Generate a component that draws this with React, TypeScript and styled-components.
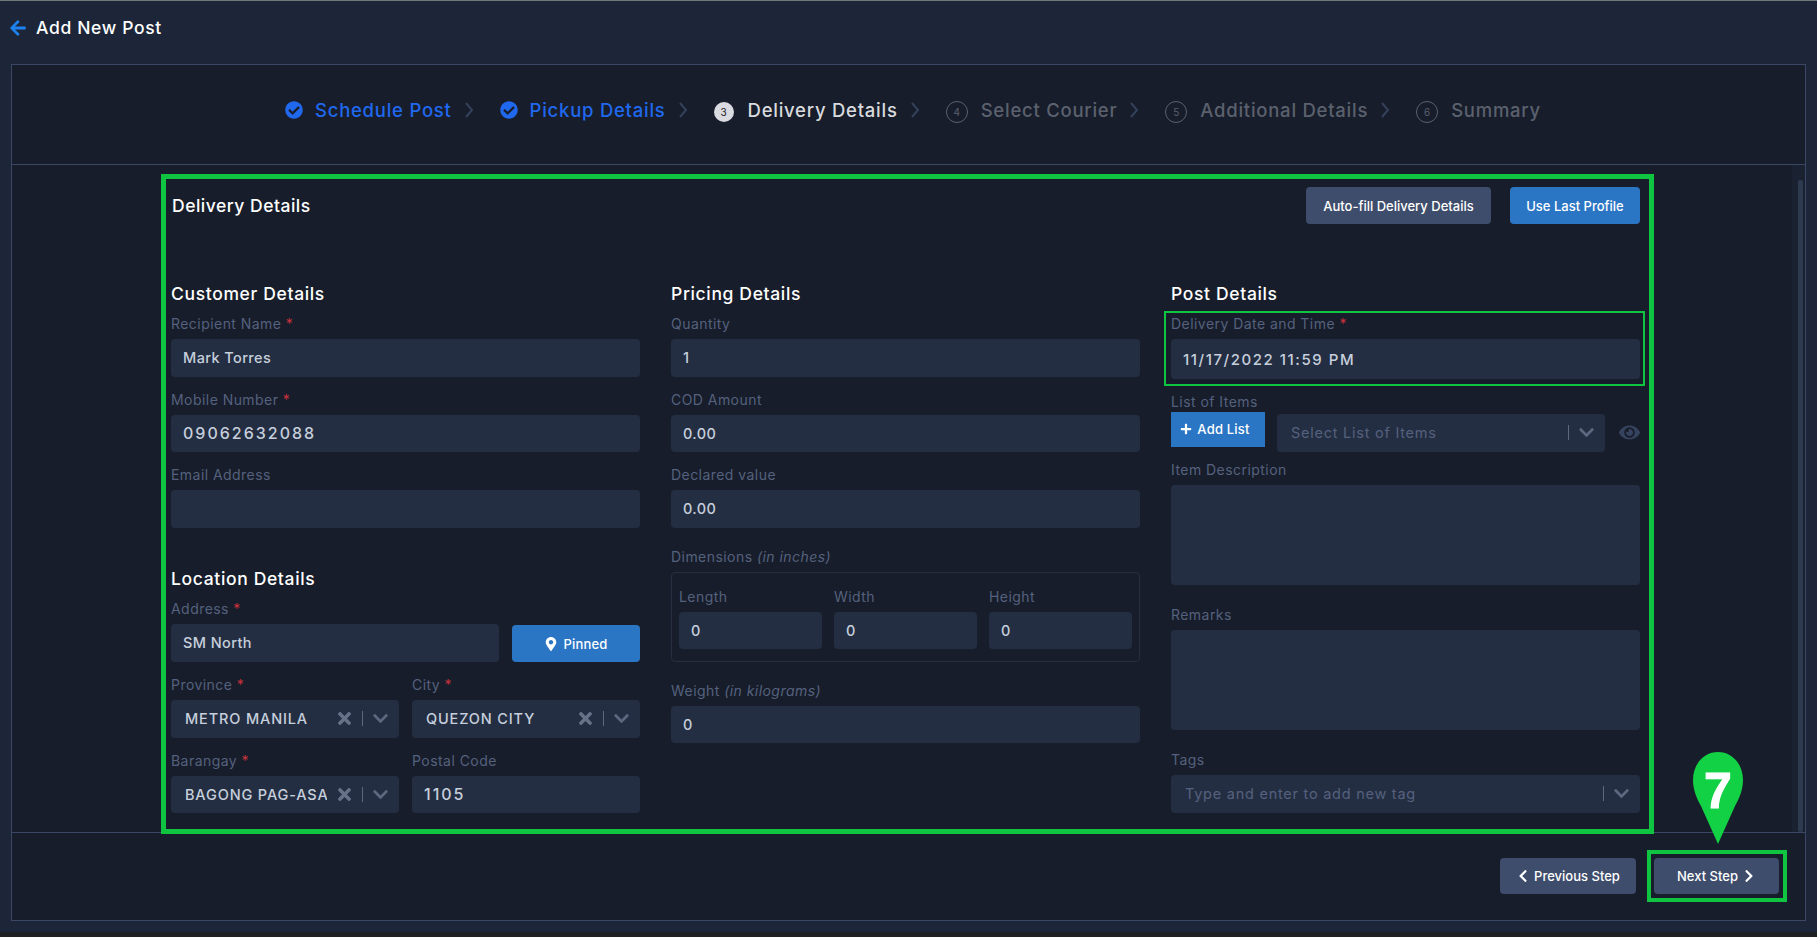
import styled, { createGlobalStyle } from "styled-components";
import {
  FaArrowLeft,
  FaCheckCircle,
  FaChevronDown,
  FaChevronLeft,
  FaChevronRight,
  FaEye,
  FaMapMarkerAlt,
  FaPlus,
  FaTimes,
} from "react-icons/fa";

const steps = [
  { label: "Schedule Post", state: "done" },
  { label: "Pickup Details", state: "done" },
  { label: "Delivery Details", state: "active" },
  { label: "Select Courier", state: "todo" },
  { label: "Additional Details", state: "todo" },
  { label: "Summary", state: "todo" },
];

const Required = () => <Star>*</Star>;

const App = () => {
  return (
    <Page>
      <GlobalStyle />
      <Header>
        <BackIcon />
        <PageTitle>Add New Post</PageTitle>
      </Header>
      <Frame>
        <Stepper>
          {steps.map((step, i) => (
            <Step key={step.label}>
              {step.state === "done" ? (
                <DoneIcon />
              ) : (
                <StepNumber $active={step.state === "active"}>{i + 1}</StepNumber>
              )}
              <StepLabel $state={step.state}>{step.label}</StepLabel>
              {i < steps.length - 1 && (
                <StepArrow width="10" height="16" viewBox="0 0 10 16">
                  <path d="M2 1l6 7-6 7" fill="none" stroke="currentColor" strokeWidth="2" />
                </StepArrow>
              )}
            </Step>
          ))}
        </Stepper>
        <Body>
          <Panel>
            <PanelHead>
              <PanelTitle>Delivery Details</PanelTitle>
              <PanelActions>
                <SlateButton>Auto-fill Delivery Details</SlateButton>
                <BlueButton>Use Last Profile</BlueButton>
              </PanelActions>
            </PanelHead>
            <Columns>
              <Column>
                <SectionTitle>Customer Details</SectionTitle>
                <Field>
                  <Label>Recipient Name <Required /></Label>
                  <Input>Mark Torres</Input>
                </Field>
                <Field>
                  <Label>Mobile Number <Required /></Label>
                  <Input $numeric>09062632088</Input>
                </Field>
                <Field>
                  <Label>Email Address</Label>
                  <Input />
                </Field>
                <LocationTitle>Location Details</LocationTitle>
                <Field>
                  <Label>Address <Required /></Label>
                  <AddressRow>
                    <Input>SM North</Input>
                    <PinButton>
                      <FaMapMarkerAlt size={14} />
                      Pinned
                    </PinButton>
                  </AddressRow>
                </Field>
                <TwoUp>
                  <Field>
                    <Label>Province <Required /></Label>
                    <Select>
                      <SelectValue>METRO MANILA</SelectValue>
                      <ClearIcon />
                      <Divider />
                      <CaretIcon />
                    </Select>
                  </Field>
                  <Field>
                    <Label>City <Required /></Label>
                    <Select>
                      <SelectValue>QUEZON CITY</SelectValue>
                      <ClearIcon />
                      <Divider />
                      <CaretIcon />
                    </Select>
                  </Field>
                  <Field>
                    <Label>Barangay <Required /></Label>
                    <Select>
                      <SelectValue>BAGONG PAG-ASA</SelectValue>
                      <ClearIcon />
                      <Divider />
                      <CaretIcon />
                    </Select>
                  </Field>
                  <Field>
                    <Label>Postal Code</Label>
                    <Input $numeric>1105</Input>
                  </Field>
                </TwoUp>
              </Column>

              <Column>
                <SectionTitle>Pricing Details</SectionTitle>
                <Field>
                  <Label>Quantity</Label>
                  <Input>1</Input>
                </Field>
                <Field>
                  <Label>COD Amount</Label>
                  <Input>0.00</Input>
                </Field>
                <Field>
                  <Label>Declared value</Label>
                  <Input>0.00</Input>
                </Field>
                <DimensionsField>
                  <Label>Dimensions <em>(in inches)</em></Label>
                  <DimensionsBox>
                    <div>
                      <Label>Length</Label>
                      <Input>0</Input>
                    </div>
                    <div>
                      <Label>Width</Label>
                      <Input>0</Input>
                    </div>
                    <div>
                      <Label>Height</Label>
                      <Input>0</Input>
                    </div>
                  </DimensionsBox>
                </DimensionsField>
                <Field>
                  <Label>Weight <em>(in kilograms)</em></Label>
                  <Input>0</Input>
                </Field>
              </Column>

              <Column>
                <SectionTitle>Post Details</SectionTitle>
                <DateField>
                  <Label>Delivery Date and Time <Required /></Label>
                  <DateInput>11/17/2022 11:59 PM</DateInput>
                </DateField>
                <ListField>
                  <Label>List of Items</Label>
                  <ListRow>
                    <AddListButton>
                      <FaPlus size={12} />
                      Add List
                    </AddListButton>
                    <Select>
                      <Placeholder>Select List of Items</Placeholder>
                      <Divider />
                      <CaretIcon />
                    </Select>
                    <EyeIcon />
                  </ListRow>
                </ListField>
                <TextareaField>
                  <Label>Item Description</Label>
                  <Textarea />
                </TextareaField>
                <TextareaField>
                  <Label>Remarks</Label>
                  <Textarea />
                </TextareaField>
                <Field>
                  <Label>Tags</Label>
                  <Select>
                    <Placeholder>Type and enter to add new tag</Placeholder>
                    <Divider />
                    <CaretIcon />
                  </Select>
                </Field>
              </Column>
            </Columns>
          </Panel>
          <ScrollTrack>
            <ScrollThumb />
          </ScrollTrack>
        </Body>
        <Footer>
          <PrevButton>
            <FaChevronLeft size={14} />
            Previous Step
          </PrevButton>
          <NextWrap>
            <NextButton>
              Next Step
              <FaChevronRight size={14} />
            </NextButton>
            <Pin>
              <svg width="50" height="92" viewBox="0 0 50 92">
                <path
                  d="M25 0C11 0 0 12 0 28c0 9 3 17 8 26L25 92l17-38c5-9 8-17 8-26C50 12 39 0 25 0Z"
                  fill="#12d144"
                />
              </svg>
              <PinNumber>7</PinNumber>
            </Pin>
          </NextWrap>
        </Footer>
      </Frame>
      <BottomStrip />
    </Page>
  );
};

export default App;

const GlobalStyle = createGlobalStyle`
  html, body {
    margin: 0;
    padding: 0;
    background: #1c2638;
  }
  * {
    box-sizing: border-box;
  }
  body {
    font-family: "Inter", "Noto Sans", sans-serif;
  }
`;

const Page = styled.div`
  width: 1817px;
  height: 937px;
  overflow: hidden;
  display: flex;
  flex-direction: column;
  background: #1c2638;
  border-top: 1px solid #6f7a7c;
`;

const Header = styled.div`
  height: 63px;
  flex: none;
  display: flex;
  align-items: flex-start;
  gap: 9px;
  padding: 17px 0 0 9px;
`;

const BackIcon = styled(FaArrowLeft)`
  color: #1d82ed;
  width: 18px;
  height: 18px;
  margin-top: 1px;
`;

const PageTitle = styled.div`
  color: #fff;
  font-size: 17.5px;
  font-weight: 500;
  line-height: 20px;
  letter-spacing: 0.65px;
`;

const Frame = styled.div`
  height: 857px;
  flex: none;
  margin: 0 11px 0 11px;
  width: 1795px;
  display: flex;
  flex-direction: column;
  background: #171d2a;
  border: 1px solid #3a4865;
`;

const Stepper = styled.div`
  height: 100px;
  flex: none;
  display: flex;
  align-items: center;
  justify-content: flex-start;
  padding: 0 0 9px 273px;
  border-bottom: 1px solid #3a4865;
`;

const Step = styled.div`
  display: flex;
  align-items: center;
`;

const DoneIcon = styled(FaCheckCircle)`
  width: 18px;
  height: 18px;
  color: #2068ee;
  margin-right: 12px;
`;

const StepNumber = styled.span<{ $active: boolean }>`
  width: ${({ $active }) => ($active ? "20px" : "22px")};
  height: ${({ $active }) => ($active ? "20px" : "22px")};
  margin-right: ${({ $active }) => ($active ? "14px" : "13px")};
  margin-top: 3px;
  border-radius: 50%;
  display: flex;
  align-items: center;
  justify-content: center;
  font-size: 10px;
  background: ${({ $active }) => ($active ? "#d9dbe0" : "transparent")};
  border: ${({ $active }) => ($active ? "none" : "1px solid #5a6070")};
  color: ${({ $active }) => ($active ? "#222" : "#5a6070")};
`;

const StepLabel = styled.span<{ $state: string }>`
  font-size: 18.5px;
  font-weight: 500;
  letter-spacing: 0.75px;
  white-space: nowrap;
  color: ${({ $state }) =>
    $state === "done" ? "#2068ee" : $state === "active" ? "#d8dade" : "#5b616e"};
`;

const StepArrow = styled.svg`
  color: #34415b;
  margin: 0 26px 0 12px;
`;

const Body = styled.div`
  flex: 1;
  min-height: 0;
  display: flex;
  justify-content: space-between;
  padding: 9px 0 0 149px;
`;

const Panel = styled.div`
  width: 1493px;
  height: 660px;
  flex: none;
  position: relative;
  z-index: 1;
  border: 5px solid #0ec441;
  padding: 8px 9px 0 5px;
`;

const PanelHead = styled.div`
  height: 37px;
  margin-bottom: 59px;
  display: flex;
  align-items: center;
  justify-content: space-between;
`;

const PanelTitle = styled.div`
  color: #fff;
  font-size: 17.5px;
  font-weight: 500;
  letter-spacing: 0.5px;
  padding-left: 1px;
  margin-top: -1px;
`;

const PanelActions = styled.div`
  display: flex;
  gap: 19px;
`;

const ActionButton = styled.button`
  height: 37px;
  border: none;
  border-radius: 4px;
  color: #fff;
  font-family: inherit;
  font-size: 13px;
  font-weight: 500;
  padding: 0;
`;

const SlateButton = styled(ActionButton)`
  width: 185px;
  background: #3e4d6b;
`;

const BlueButton = styled(ActionButton)`
  width: 130px;
  background: #2b76c4;
`;

const Columns = styled.div`
  display: grid;
  grid-template-columns: repeat(3, 469px);
  column-gap: 31px;
`;

const Column = styled.div`
  min-width: 0;
`;

const SectionTitle = styled.div`
  color: #fff;
  font-size: 17.5px;
  font-weight: 500;
  line-height: 22px;
  letter-spacing: 0.65px;
  margin-bottom: 8px;
`;

const LocationTitle = styled(SectionTitle)`
  margin-top: 40.5px;
`;

const Field = styled.div`
  margin-bottom: 12px;
`;

const Label = styled.div`
  color: #55617e;
  font-size: 14px;
  font-weight: 400;
  line-height: 20px;
  padding-top: 1px;
  letter-spacing: 0.45px;
  margin-bottom: 5px;
  white-space: nowrap;
`;

const Star = styled.span`
  color: #c8323c;
`;

const Input = styled.div<{ $numeric?: boolean }>`
  height: 37.5px;
  flex: 1;
  min-width: 0;
  display: flex;
  align-items: center;
  padding: 0 12px;
  background: #242e42;
  border-radius: 4px;
  color: #c6cfdc;
  font-size: ${({ $numeric }) => ($numeric ? "16px" : "14.5px")};
  font-weight: 500;
  letter-spacing: ${({ $numeric }) => ($numeric ? "2px" : "0.4px")};
`;

const AddressRow = styled.div`
  display: flex;
  gap: 13px;
`;

const PinButton = styled.button`
  width: 128px;
  height: 37px;
  flex: none;
  margin-top: 1px;
  display: flex;
  align-items: center;
  justify-content: center;
  gap: 5px;
  border: none;
  border-radius: 4px;
  background: #2b76c4;
  color: #fff;
  font-family: inherit;
  font-size: 13px;
  font-weight: 500;
  letter-spacing: 0.2px;
`;

const TwoUp = styled.div`
  display: grid;
  grid-template-columns: 228px 228px;
  column-gap: 13px;
`;

const Select = styled.div`
  height: 37.5px;
  flex: 1;
  min-width: 0;
  display: flex;
  align-items: center;
  padding: 0 11px 0 14px;
  background: #242e42;
  border-radius: 4px;
`;

const SelectValue = styled.span`
  flex: 1;
  min-width: 0;
  overflow: hidden;
  white-space: nowrap;
  color: #c6cfdc;
  font-size: 14.5px;
  font-weight: 500;
  letter-spacing: 0.85px;
`;

const Placeholder = styled(SelectValue)`
  color: #55617e;
  font-weight: 400;
  letter-spacing: 0.75px;
`;

const ClearIcon = styled(FaTimes)`
  flex: none;
  width: 13px;
  height: 19px;
  margin-left: 11px;
  color: #677187;
`;

const Divider = styled.span`
  flex: none;
  width: 1px;
  height: 15px;
  margin: 0 10px 0 11px;
  background: #5d6880;
`;

const CaretIcon = styled(FaChevronDown)`
  flex: none;
  width: 15px;
  height: 17px;
  color: #5d6880;
`;

const DimensionsField = styled.div`
  margin-top: 18px;
  margin-bottom: 18px;
`;

const DimensionsBox = styled.div`
  height: 90px;
  display: grid;
  grid-template-columns: repeat(3, 143px);
  column-gap: 12px;
  padding: 13px 7px 0;
  border: 1px solid #262f42;
  border-radius: 4px;
`;

const DateField = styled.div`
  position: relative;
  margin-bottom: 11.5px;

  &::after {
    content: "";
    position: absolute;
    top: -2px;
    left: -7px;
    right: -5px;
    bottom: -7px;
    border: 2px solid #0ec441;
    pointer-events: none;
  }
`;

const DateInput = styled(Input)`
  height: 40px;
  font-size: 15px;
  letter-spacing: 1.55px;
`;

const ListField = styled.div`
  margin-bottom: 7.5px;

  ${Label} {
    margin-bottom: 0;
  }
`;

const ListRow = styled.div`
  display: flex;
  align-items: flex-start;
  gap: 12px;

  ${Select} {
    margin-top: 2px;
    height: 38px;
  }
`;

const AddListButton = styled.button`
  width: 94px;
  height: 35px;
  flex: none;
  display: flex;
  align-items: center;
  justify-content: center;
  gap: 5px;
  padding: 0 6px 0 0;
  border: none;
  background: #2b76c4;
  color: #fff;
  font-family: inherit;
  font-size: 13px;
  font-weight: 500;
  letter-spacing: 0.2px;
`;

const EyeIcon = styled(FaEye)`
  flex: none;
  width: 21px;
  height: 19px;
  margin: 11px 0 0 2px;
  color: #36435f;
`;

const TextareaField = styled.div`
  margin-bottom: 19px;
`;

const Textarea = styled.div`
  height: 100px;
  background: #242e42;
  border-radius: 4px;
`;

const ScrollTrack = styled.div`
  width: 13px;
  flex: none;
  margin-top: -9px;
  padding: 15px 2px 0 6px;
  background: #1a2130;
`;

const ScrollThumb = styled.div`
  height: 100%;
  border-radius: 2px;
  background: #2e3a50;
`;

const Footer = styled.div`
  height: 88px;
  flex: none;
  display: flex;
  justify-content: flex-end;
  gap: 18px;
  padding: 25px 26px 0 0;
  border-top: 1px solid #3a4865;
`;

const FooterButton = styled(ActionButton)`
  height: 36px;
  display: flex;
  align-items: center;
  justify-content: center;
  gap: 4px;
  background: #3e4d6b;
`;

const PrevButton = styled(FooterButton)`
  width: 136px;
`;

const NextButton = styled(FooterButton)`
  width: 100%;
`;

const NextWrap = styled.div`
  position: relative;
  width: 125px;
  height: 36px;

  &::after {
    content: "";
    position: absolute;
    inset: -8px -8px -8px -7px;
    border: 4px solid #0ec441;
    pointer-events: none;
  }
`;

const Pin = styled.div`
  position: absolute;
  left: 39px;
  top: -106px;
  width: 50px;
  height: 92px;
  z-index: 2;
`;

const PinNumber = styled.span`
  position: absolute;
  left: 0;
  right: 0;
  top: 9px;
  text-align: center;
  color: #fff;
  font-family: "Liberation Sans", sans-serif;
  font-size: 50px;
  font-weight: 700;
  line-height: 60px;
  -webkit-text-stroke: 1px #fff;
`;

const BottomStrip = styled.div`
  height: 5px;
  margin-top: 11px;
  flex: none;
  background: #1e2024;
`;
